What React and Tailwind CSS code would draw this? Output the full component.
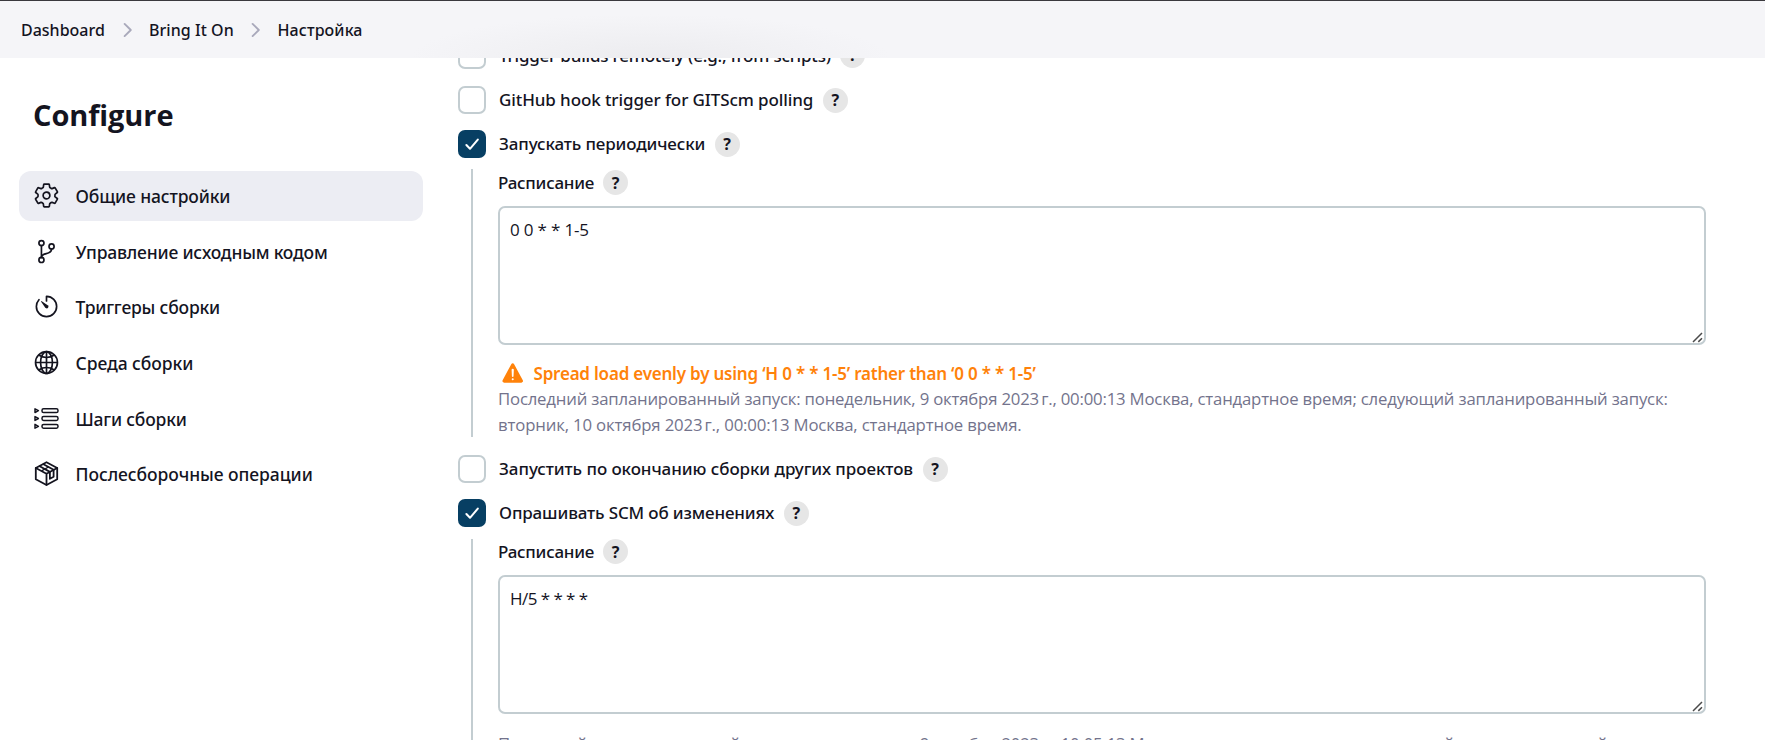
import React from "react";
import {
  IoSettingsOutline,
  IoGitBranchOutline,
  IoTimerOutline,
  IoGlobeOutline,
  IoWarning,
} from "react-icons/io5";

function Chevron() {
  return (
    <svg className="h-4 w-[10px] shrink-0" viewBox="0 0 10 16" fill="none" stroke="#a9a9bb" strokeWidth="1.9" strokeLinecap="round" strokeLinejoin="round">
      <path d="M1.6 1.9 7.8 8l-6.2 6.1" />
    </svg>
  );
}

function StepsIcon() {
  return (
    <svg className="size-[27px]" viewBox="-1 -1 27 27" fill="none" stroke="currentColor" strokeWidth="1.5" strokeLinejoin="round">
      {[4.7, 12.5, 20.3].map((y) => (
        <g key={y}>
          <path d={`M1 ${y - 1.9}v3.8l3.4-1.9z`} />
          <rect x="8" y={y - 1.9} width="16" height="3.8" rx="1.6" />
        </g>
      ))}
    </svg>
  );
}

function PackageIcon() {
  return (
    <svg className="size-[27px]" viewBox="-1 -1 27 27" fill="none" stroke="currentColor" strokeWidth="1.8" strokeLinejoin="round" strokeLinecap="round">
      <path d="M12.5 1.2 23.2 7v11.2L12.5 24 1.8 18.2V7z" />
      <path d="M1.8 7l10.7 5.8L23.2 7M12.5 12.8v11" />
      <path d="M9.5 3.2l10.1 5.6v7l-3.7 2v-6.9L5.7 5.3" />
      <path d="M8 9.6l6-3.3" strokeWidth="1.3" />
    </svg>
  );
}

const ionicon = "size-[27px]";
const sections = [
  { label: "Общие настройки", tracking: "tracking-[-0.14px]", icon: <IoSettingsOutline className={ionicon} />, active: true },
  { label: "Управление исходным кодом", tracking: "tracking-[-0.2px]", icon: <IoGitBranchOutline className={ionicon} /> },
  { label: "Триггеры сборки", tracking: "tracking-[-0.18px]", icon: <IoTimerOutline className={ionicon} /> },
  { label: "Среда сборки", tracking: "tracking-[-0.06px]", icon: <IoGlobeOutline className={ionicon} /> },
  { label: "Шаги сборки", tracking: "tracking-[-0.2px]", icon: <StepsIcon /> },
  { label: "Послесборочные операции", tracking: "tracking-[-0.05px]", icon: <PackageIcon /> },
];

function Help() {
  return (
    <span className="flex size-[25px] shrink-0 items-center justify-center rounded-full bg-[#e6e6e6] text-[16px] leading-none font-bold">
      ?
    </span>
  );
}

function Trigger({ label, tracking, checked, className = "", labelClass = "" }) {
  return (
    <div className={`flex h-7 items-center ${className}`}>
      {checked ? (
        <span className="flex size-7 shrink-0 items-center justify-center rounded-[7px] bg-[#073f63]">
          <svg className="size-[14px]" viewBox="0 0 14 14" fill="none" stroke="white" strokeWidth="2" strokeLinecap="round" strokeLinejoin="round">
            <path d="M1.4 8 5 11.8 12.8 2.6" />
          </svg>
        </span>
      ) : (
        <span className="size-7 shrink-0 rounded-[7px] border-2 border-[#c3cdd1] bg-white" />
      )}
      <span className={`ml-[13px] text-[17px] font-medium ${tracking} ${labelClass}`}>{label}</span>
      <span className="ml-[9.5px]">
        <Help />
      </span>
    </div>
  );
}

function Schedule({ value, valueTracking, className = "", children }) {
  return (
    <div className={`ml-[13px] border-l-2 border-[#c3cdd1] pl-[25px] ${className}`}>
      <div className="flex h-[25px] items-center gap-[9px]">
        <span className="text-[17px] font-medium tracking-[-0.27px]">Расписание</span>
        <Help />
      </div>
      <div className="relative mt-[11px] h-[139px] w-[1208px]">
        <textarea
          readOnly
          defaultValue={value}
          className={`block h-full w-full resize-none rounded-[7px] border-2 border-[#c3cdd1] bg-white px-[10px] py-2 font-['Open_Sans',sans-serif] text-[17px] leading-[27px] outline-none ${valueTracking}`}
        />
        <svg className="absolute right-[3px] bottom-[2px] size-[11px]" viewBox="0 0 11 11" fill="none" stroke="#4a4a4a" strokeWidth="1.5">
          <path d="M1 10 10 1M6.3 9.9 10 6.2" />
        </svg>
      </div>
      {children}
    </div>
  );
}

export default function App() {
  return (
    <div className="h-[740px] w-[1765px] overflow-hidden bg-white font-['Noto_Sans',sans-serif] whitespace-nowrap text-[#14141f]">
      <header className="flex h-[58px] items-center border-t border-[#3a393e] bg-[#f5f5f8] bg-[radial-gradient(ellipse_240px_44px_at_650px_100%,#ececef,#f5f5f800)] pl-[21px] text-[16px] font-medium">
        <span className="w-[101.5px] tracking-[0px]">Dashboard</span>
        <Chevron />
        <span className="ml-[16.5px] w-[101.5px] tracking-[0.05px]">Bring It On</span>
        <Chevron />
        <span className="ml-[17px] tracking-[0.1px]">Настройка</span>
      </header>

      <div className="flex h-[682px] overflow-hidden">
        <aside className="ml-[19px] w-[404px] shrink-0">
          <h1 className="mt-[37px] pl-[14px] font-['Open_Sans',sans-serif] text-[29px] leading-[40px] font-bold tracking-[-0.1px]">
            Configure
          </h1>
          <nav className="mt-9 flex flex-col gap-[5.7px]">
            {sections.map((s) => (
              <div key={s.label} className={`flex h-[50px] items-center rounded-[12px] pl-[14px] ${s.active ? "bg-[#ecedf3]" : ""}`}>
                <span className="-mt-px">{s.icon}</span>
                <span className={`ml-[15.5px] text-[17.5px] font-medium ${s.tracking}`}>{s.label}</span>
              </div>
            ))}
          </nav>
        </aside>

        <main className="-mt-[17px] ml-[35px]">
          <Trigger labelClass="pt-0.5" label="Trigger builds remotely (e.g., from scripts)" tracking="tracking-[-0.2px]" />
          <Trigger className="mt-[17px]" label="GitHub hook trigger for GITScm polling" tracking="tracking-[-0.1px]" />
          <Trigger className="mt-4" checked label="Запускать периодически" tracking="tracking-[-0.13px]" />

          <Schedule className="mt-[11px] h-[268px] pt-px" value="0 0 * * 1-5" valueTracking="tracking-[-0.18px]">
            <div className="mt-[15px] flex h-[27px] items-center text-[17px] font-semibold text-[#ff820a]">
              <IoWarning className="-mt-px ml-[1.5px] size-[26px]" />
              <span className="ml-[8px] tracking-[-0.21px]">Spread load evenly by using ‘H 0 * * 1-5’ rather than ‘0 0 * * 1-5’</span>
            </div>
            <div className="-mt-px font-['Open_Sans',sans-serif] text-[16.75px] leading-[26px] text-[#73738c]">
              <p className="tracking-[-0.19px]">
                Последний запланированный запуск: понедельник, 9 октября 2023{"\u202f"}г., 00:00:13 Москва, стандартное время; следующий запланированный запуск:
              </p>
              <p className="tracking-[-0.15px]">вторник, 10 октября 2023{"\u202f"}г., 00:00:13 Москва, стандартное время.</p>
            </div>
          </Schedule>

          <Trigger className="mt-[18px]" label="Запустить по окончанию сборки других проектов" tracking="tracking-[-0.06px]" />
          <Trigger className="mt-4" checked label="Опрашивать SCM об изменениях" tracking="tracking-[-0.14px]" />

          <Schedule className="mt-3 h-[268px]" value="H/5 * * * *" valueTracking="tracking-[-0.55px]">
            <p className="mt-[17px] font-['Open_Sans',sans-serif] text-[16.75px] leading-[26px] tracking-[-0.19px] text-[#73738c]">
              Последний запланированный запуск: понедельник, 9 октября 2023{"\u202f"}г., 10:05:13 Москва, стандартное время; следующий запланированный запуск:
            </p>
          </Schedule>
        </main>
      </div>
    </div>
  );
}
